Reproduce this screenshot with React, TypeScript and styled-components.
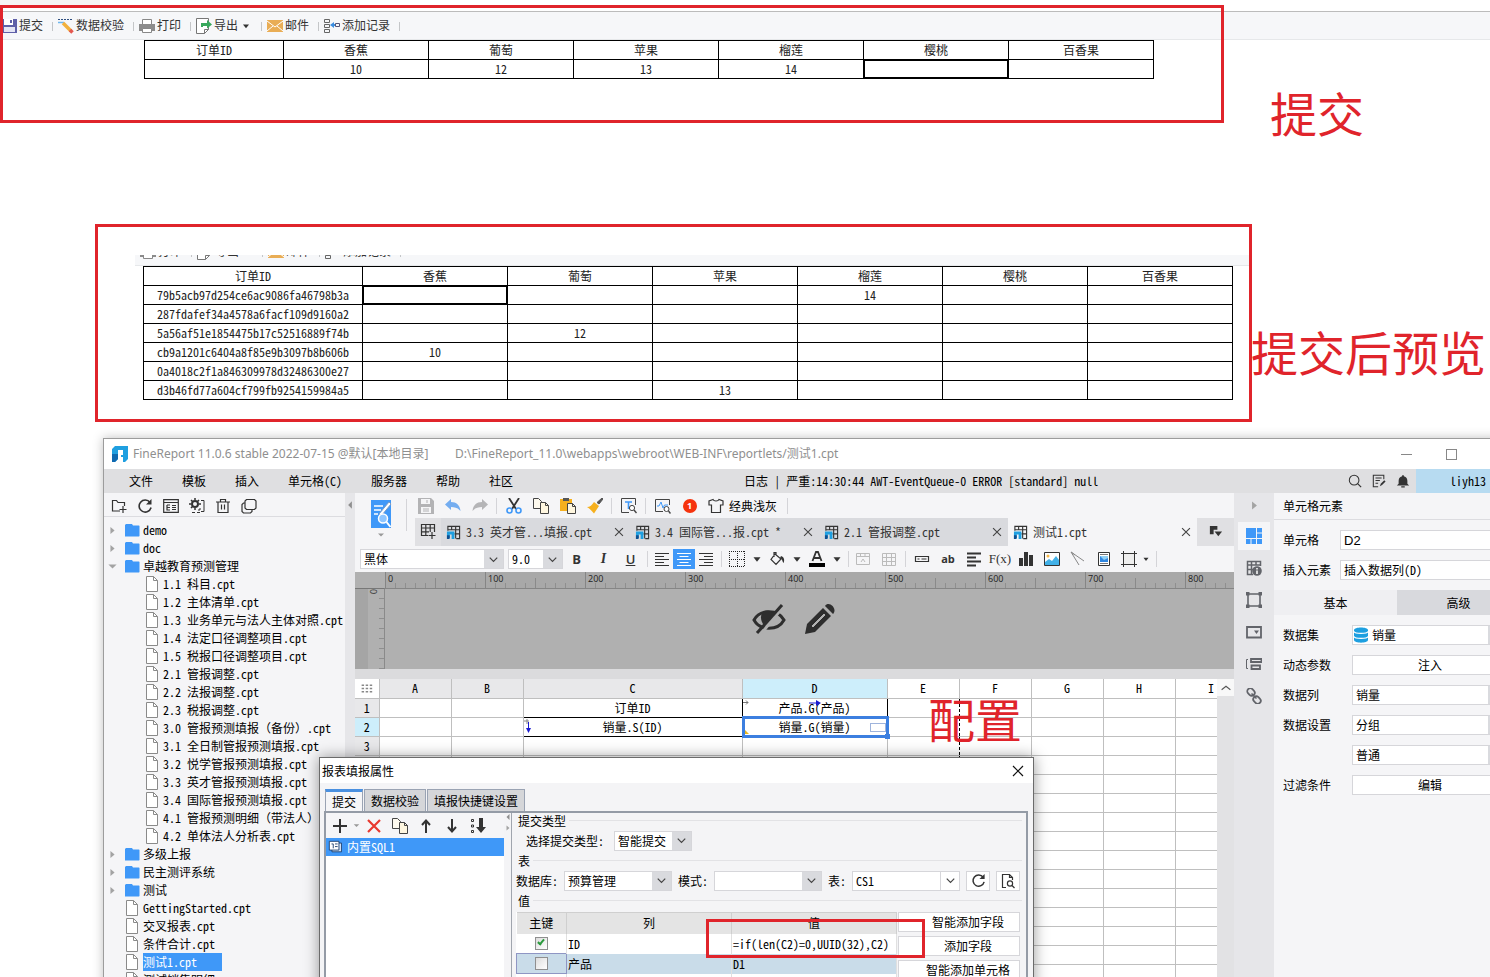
import React from "react";
import styled, { createGlobalStyle, css } from "styled-components";

const MONO = `"Noto Sans Mono CJK SC", "Liberation Mono", "Noto Sans CJK SC", monospace`;
const SANS = `"Noto Sans", "Noto Sans CJK SC", sans-serif`;
const RED = "#e0242b";
const BLUE = "#3f98f8";
const PANEL = "#f5f5f7";

const Global = createGlobalStyle`
  *, *::before, *::after { box-sizing: border-box; }
  html, body { margin: 0; padding: 0; background: #fff; }
  body { font: 12px/18px ${MONO}; color: #000; overflow: hidden; }
  button, input, select { font: inherit; color: inherit; margin: 0; padding: 0; border: 0; background: none; border-radius: 0; }
  h1, h2, h3, ul { margin: 0; padding: 0; font-size: 12px; font-weight: normal; list-style: none; }
  svg { display: block; flex: none; }
`;

/* ---------- icons ---------- */

const glyphs: Record<string, React.ReactNode> = {
  saveColor: (<><path d="M0 1h16v14H2l-2-2z" fill="#5f60a8" /><path d="M3 1h9v6H3z" fill="#fff" /><path d="M9 2h2v3H9z" fill="#5f60a8" /><path d="M3 9h11v5H3z" fill="#e4e5f4" /></>),
  verify: (<><path d="M0 1.500h14" stroke="#2f4f80" strokeDasharray="2 1" /><path d="M0 4.500h6" stroke="#6fb7ee" strokeWidth="1.500" /><path d="M5 5l8 8" stroke="#f2b13c" strokeWidth="3.500" /><path d="M12 12l2.500 2.500" stroke="#e4574f" strokeWidth="3.500" /></>),
  print: (<><path d="M3.500 1.500h9v5h-9z" fill="#fff" stroke="#888" /><path d="M0 6h16v7H0z" fill="#8c8c8c" /><path d="M3.500 10.500h9v4h-9z" fill="#fff" stroke="#888" /></>),
  export: (<><path d="M.500.500h12v11l-4 4h-8z" fill="#fff" stroke="#777" /><path d="M12.500 11.500h-4v4" fill="none" stroke="#777" /><path d="M5 5h6V2l5 4.500-5 4V8H7v1H5z" fill="#37a85c" /></>),
  mail: (<><path d="M0 2h16v12H0z" fill="#e9ad55" /><path d="M0 3l8 6 8-6M0 13l6-5M16 13l-6-5" fill="none" stroke="#fff" /></>),
  record: (<><path d="M.500 1.500h5v3h-5zM.500 6.500h5v3h-5zM.500 11.500h5v3h-5z" fill="none" stroke="#666" /><path d="M6 7l4-3v2h1v2h-1v2z" fill="#3c8ee0" /><path d="M11.500 5.500h4v3h-4z" fill="none" stroke="#557" /></>),
  logo: (<><path d="M0 3l3-3h13v13l-3 3H9V6H6v7l-3 3H0z" fill="#1f9fe0" /><path d="M0 8h6v5l-3 3H0z" fill="#0f69b0" /><path d="M6 4h5v5H9v2h2v5H9V7H6z" fill="#fff" /></>),
  newFolder: (<path d="M9 13H1.500V2.500h4l1.500 2h6.500V8M12 8v7M8.500 11.500h7" fill="none" stroke="#333" strokeWidth="1.200" />),
  refresh: (<><path d="M13 4.500A6 6 0 1 0 14 9.500" fill="none" stroke="#333" strokeWidth="1.600" /><path d="M14.500 1v5.500H9z" fill="#333" /></>),
  listBox: (<path d="M.700 1.700h14.600v12.600H.700zM.700 4.500h14.600M4 7v5h3M4 7h3M4 9.500h3M9 7.500h4M9 9.500h4M9 11.500h4" fill="none" stroke="#333" strokeWidth="1.200" />),
  gearBox: (<><circle cx="6" cy="6" r="3" fill="none" stroke="#333" strokeWidth="2" /><path d="M6 0v2M6 10v2M0 6h2M10 6h2M2 2l1.500 1.500M10 2L8.500 3.500M2 10l1.500-1.500" stroke="#333" strokeWidth="1.500" /><path d="M12 2.500h3v11h-3M3 14.500h3M8 14.500h3M11 10v2h-2" fill="none" stroke="#333" /></>),
  trash: (<path d="M1 4h14M5.500 4V1.500h5V4M3 4v10.500h10V4M6.500 6.500v5M9.500 6.500v5" fill="none" stroke="#333" strokeWidth="1.200" />),
  cascade: (<path d="M5.500 1.500h8l1.500 1.500v7l-1.500 1.500h-8L4 10V3zM4 5H2.500L1 6.500v7l1.500 1.500h7L11 13.500V12" fill="none" stroke="#333" strokeWidth="1.200" />),
  folder: (<path d="M1 3l1-1h6l1 1.500h6l.500.500v10l-.500.500H1z" fill={BLUE} />),
  file: (<><path d="M2.500.500h7l4 4v11h-11z" fill="#fff" stroke="#8a8a8a" /><path d="M9.500.500v4h4" fill="none" stroke="#8a8a8a" /></>),
  save: (<><path d="M0 0h13l3 3v13H0z" fill="#b3b3b5" /><path d="M3 1h9v5H3zM3 9h10v6H3z" fill="#f5f5f7" /><path d="M9 2v3M5 11h6M5 13h6" stroke="#b3b3b5" /></>),
  undo: (<path d="M6 1v3c6 0 9 4 9.500 9C13 10 10 9 6 9v3L0 6.500z" fill="#74adf0" />),
  redo: (<path d="M10 1v3C4 4 1 8 .500 13 3 10 6 9 10 9v3l6-5.500z" fill="#b5b5b7" />),
  cut: (<><path d="M3 0l7 11M13 0L6 11" stroke="#333" strokeWidth="1.800" /><circle cx="3.500" cy="12.500" r="2.500" fill="none" stroke={BLUE} strokeWidth="1.600" /><circle cx="12.500" cy="12.500" r="2.500" fill="none" stroke={BLUE} strokeWidth="1.600" /></>),
  copy: (<><path d="M.500.500h5l3 3v7h-8z" fill="#fdf9ee" stroke="#444" /><path d="M7.500 4.500h5l3 3v8h-8z" fill="#fff7e0" stroke="#444" /><path d="M12.500 4.500v3h3" fill="none" stroke="#444" /></>),
  paste: (<><path d="M0 1h12v12H0z" fill="#f6b01e" /><path d="M3 0h6v3H3z" fill="#555" /><path d="M7.500 5.500h5l3 3v7h-8z" fill="#fff7e0" stroke="#444" /><path d="M12.500 5.500v3h3" fill="none" stroke="#444" /></>),
  brush: (<><path d="M15 0l1 1-4 5-2-1.500z" fill="#555" stroke="#555" /><path d="M7 4l5 4-5 7.500C4 12 2 10 0 9c3 0 5-2 7-5z" fill="#f6b01e" /></>),
  find: (<><path d="M14.500 7V.500H.500v14H8" fill="none" stroke="#444" /><path d="M4 4h7M7.500 4v7" stroke={BLUE} strokeWidth="1.600" /><circle cx="11" cy="10" r="2.600" fill="#fff" stroke="#444" /><path d="M13 12l2.500 3" stroke="#444" strokeWidth="1.400" /></>),
  monitor: (<><path d="M14.500 7V1.500H.500v12H8" fill="none" stroke="#444" /><path d="M2 8h2l2-4 2 6 1.500-3H13" fill="none" stroke={BLUE} /><circle cx="11.500" cy="11" r="2.500" fill="#fff" stroke="#444" /><path d="M13.500 13l2 2.500" stroke="#444" strokeWidth="1.400" /></>),
  shirt: (<path d="M5 1.500L1 3v4h2.500v7.500h9V7H15V3l-4-1.500c-1 2-5 2-6 0z" fill="none" stroke="#333" strokeWidth="1.200" />),
  gridPlus: (<path d="M8 12.500H1.500v-11h13V9M1.500 5h13M1.500 8.800H9M5.800 1.500v11M10.200 1.500V9M12 9v7M8.500 12.500h7" fill="none" stroke="#333" strokeWidth="1.200" />),
  report: (<><path d="M2 6V1.500h12.500v13H11M2 5h12.500M9 9.500h5.500M6 1.500V5M10.300 1.500v13" fill="none" stroke="#333" strokeWidth="1.200" /><path d="M1 7h8v8H6v-5H4v4l-1 1H1z" fill="#1f9fe0" /><path d="M1 11h3v3l-1 1H1z" fill="#0f4f90" /></>),
  close: (<path d="M3.500 3.500l9 9M12.500 3.500l-9 9" stroke="#444" strokeWidth="1.300" />),
  tabMenu: (<><path d="M2 2h8v4H6v5H2z" fill="#333" /><path d="M7 8h8l-4 5z" fill="#333" /></>),
  alignL: (<path d="M1 2.500h14M1 5.500h9M1 8.500h14M1 11.500h9M1 14.500h14" stroke="#333" />),
  alignC: (<path d="M1 2.500h14M3.500 5.500h9M1 8.500h14M3.500 11.500h9M1 14.500h14" stroke="#fff" />),
  alignR: (<path d="M1 2.500h14M6 5.500h9M1 8.500h14M6 11.500h9M1 14.500h14" stroke="#333" />),
  border: (<path d="M0 .500h16M0 8.500h16M0 15.500h16M.500 0v16M8.500 0v16M15.500 0v16" fill="none" stroke="#222" strokeDasharray="1 1" />),
  bucket: (<><path d="M6 3l6 5-5 5.500-5-5zM5 6V1.500h2V5" fill="none" stroke="#333" strokeWidth="1.200" /><path d="M12 5c3 1 4 4 2.500 7-1-1-1-4-3.500-5z" fill="#333" /></>),
  fontColor: (<><path d="M3.500 10L7 1h2l3.500 9M5 7h6" fill="none" stroke="#333" strokeWidth="1.800" /><path d="M0 12h16v4H0z" fill="#000" /></>),
  merge: (<path d="M1.500 2.500h13v11h-13zM1.500 5.500h13M5.500 2.500v3M10 2.500v3M6 11l2-3 2 3" fill="none" stroke="#bbb" />),
  table: (<path d="M1.500 2.500h13v12h-13zM1.500 6.500h13M1.500 10.500h13M5.500 2.500v12M10.500 2.500v12" fill="none" stroke="#bbb" />),
  textField: (<path d="M1.500 5.500h13v5h-13zM3.500 8h2M7.500 8h5" fill="none" stroke="#333" strokeWidth="1.200" />),
  lines: (<path d="M1 2.500h14M1 6.500h9M1 10.500h14M1 14.500h9" stroke="#333" strokeWidth="2" />),
  bars: (<path d="M1 7h4v8H1zM6 1h4v14H6zM11 4h4v11h-4z" fill="#333" />),
  image: (<><path d="M.500 1.500h15v13H.500z" fill="#fff" stroke="#333" /><circle cx="4" cy="5" r="1.500" fill="#f6b94a" /><path d="M1 11l4-3 3 2 4-5 3 4v5H1z" fill="#41b1e8" /></>),
  slash: (<path d="M1 1l13 9M1 1l8 13M1 1l4 3" fill="none" stroke="#888" />),
  docImage: (<><path d="M2.500 1.500h11v13h-11z" fill="#fff" stroke="#333" /><path d="M4 3.500h8M4 12.500h8" stroke="#777" /><path d="M4 5h8v6H4z" fill="#2f86e0" /><path d="M4 5h8v2l-4 2z" fill="#8fd0f5" /></>),
  frame: (<><path d="M2.500 2.500h11v11h-11z" fill="#eee" stroke="#333" /><path d="M0 2.500h16M0 13.500h16M2.500 0v16M13.500 0v16" stroke="#333" /></>),
  search: (<><circle cx="7" cy="7" r="5.500" fill="none" stroke="#333" strokeWidth="1.200" /><path d="M11 11l4 4" stroke="#333" strokeWidth="1.400" /></>),
  docEdit: (<><path d="M13.500 6V1.500h-12v13H7M4 4.500h7M4 7.500h5M4 10.500h3" fill="none" stroke="#333" strokeWidth="1.200" /><path d="M9 14l1-3 4-4 1.500 1.500-4 4z" fill="#333" /></>),
  bell: (<path d="M8 1c1 0 1 1 1 1.500 3 .500 4 3 4 5.500v3l2 2H1l2-2V8c0-2.500 1-5 4-5.500C7 2 7 1 8 1zM6 14h4v1.500H6z" fill="#333" />),
  blocks: (<path d="M0 0h10v10H0zM11 0h5v4.500h-5zM11 5.500h5V10h-5zM0 11h4.500v5H0zM5.500 11H10v5H5.500zM11 11h5v5h-5z" fill={BLUE} />),
  gridInfo: (<><path d="M7 14.500H1.500v-13h13V6M1.500 5h13M1.500 9.500H7M5.500 1.500v13M10 1.500V5" fill="none" stroke="#62646a" strokeWidth="1.500" /><circle cx="11" cy="11" r="4.800" fill="#62646a" /><path d="M11 8v1.500M11 10.500v3.500" stroke="#fff" strokeWidth="1.500" /></>),
  square: (<><path d="M2 2h12v12H2z" fill="none" stroke="#62646a" strokeWidth="1.600" /><path d="M0 0h3.500v3.500H0zM12.500 0H16v3.500h-3.500zM0 12.500h3.500V16H0zM12.500 12.500H16V16h-3.500z" fill="#62646a" /></>),
  combo: (<><path d="M1 3h14v10.500H1z" fill="none" stroke="#62646a" strokeWidth="1.800" /><path d="M8 6.500h5L10.500 10z" fill="#62646a" /></>),
  layers: (<><path d="M2 3.500H.500v9H2" fill="none" stroke="#62646a" /><path d="M5 3h10.500v3H5zM5.500 9.500h8.500v3.500H5.500z" fill="none" stroke="#62646a" strokeWidth="1.800" /></>),
  link: (<><rect x="1" y="1" width="8" height="6" rx="3" transform="rotate(45 5 4)" fill="none" stroke="#62646a" strokeWidth="1.800" /><rect x="7" y="9" width="8" height="6" rx="3" transform="rotate(45 11 12)" fill="none" stroke="#62646a" strokeWidth="1.800" /><path d="M5.500 5.500l5 5" stroke="#62646a" strokeWidth="1.600" /></>),
  database: (<><path d="M1 3c0-3.500 14-3.500 14 0v10c0 3.500-14 3.500-14 0z" fill="#1d9fe0" /><path d="M1 4.500c1 2.500 13 2.500 14 0M1 9.500c1 2.500 13 2.500 14 0" fill="none" stroke="#fff" strokeWidth="1.200" /></>),
  plus: (<path d="M8 1v14M1 8h14" stroke="#333" strokeWidth="2" />),
  remove: (<path d="M2 2l12 12M14 2L2 14" stroke="#e8392f" strokeWidth="2.200" />),
  up: (<path d="M8 15V3M4 7l4-4.500L12 7" fill="none" stroke="#333" strokeWidth="2" />),
  down: (<path d="M8 1v12M4 9l4 4.500L12 9" fill="none" stroke="#333" strokeWidth="2" />),
  sort: (<><path d="M9 0h4v9h3l-5 6-5-6h3z" fill="#333" /><path d="M1.500 1.500h2v2h-2zM1.500 7h2v2h-2zM1.500 12.500h2v2h-2z" fill="none" stroke="#333" /></>),
  sql: (<><path d="M4.500 3.500h11v10h-11z" fill="#cfe0f5" stroke="#173a6a" /><path d="M1.500 1.500h11v10h-11z" fill="#fff" stroke="#173a6a" /><path d="M4 4.500h2v5M8 4.500h3M8 7.500h3" fill="none" stroke="#173a6a" /></>),
  preview: (<><path d="M6 14.500H2.500v-13h7l3 3V7M9.500 1.500v3h3" fill="none" stroke="#333" strokeWidth="1.200" /><circle cx="10" cy="10.500" r="2.600" fill="none" stroke="#333" strokeWidth="1.200" /><path d="M12 12.500l2.500 2.500" stroke="#333" strokeWidth="1.200" /></>),
  chevron: (<path d="M4 6l4 4 4-4" fill="none" stroke="#444" strokeWidth="1.300" />),
  chevronUp: (<path d="M3 10l5-4 5 4" fill="none" stroke="#555" strokeWidth="1.200" />),
  caret: (<path d="M4 6h8l-4 5z" fill="#333" />),
  caretGray: (<path d="M4 6h8l-4 4z" fill="#999" />),
  right: (<path d="M5 3l6 5-6 5z" fill="#a3a3a3" />),
  left: (<path d="M11 2L5 8l6 6z" fill="#8f8f8f" />),
  expanded: (<path d="M2 5h12l-6 6z" fill="#a3a3a3" />),
  dots: (<path d="M2 3h3v2H2zM7 3h3v2H7zM12 3h3v2h-3zM2 7h3v2H2zM7 7h3v2H7zM12 7h3v2h-3zM2 11h3v2H2zM7 11h3v2H7zM12 11h3v2h-3z" fill="#888" />),
  cross: (<path d="M3 3l10 10M13 3L3 13" stroke="#111" strokeWidth="1.200" />),
};

const Icon = ({ name, size = 16 }: { name: string; size?: number }) => (
  <svg width={size} height={size} viewBox="0 0 16 16" aria-hidden="true">{glyphs[name]}</svg>
);

/* ---------- page and annotations ---------- */

const Page = styled.main`
  height: 100vh; display: flex; flex-direction: column; overflow: hidden;
`;
const Section = styled.section`position: relative; flex: none;`;
const SubmitSection = styled(Section)`
  padding: 11px 0 145px;
  background: linear-gradient(#f5f5f5, #f5f5f5) 0 0 / 100px 5px no-repeat;
`;
const SubmitFrame = styled.div`
  position: absolute; top: 5px; left: 0; right: 266px; height: 118px; border: 3px solid ${RED};
  pointer-events: none;
`;
const PreviewFrame = styled.div`
  margin: 0 238px 0 95px; padding: 28px 0 19px 37px; border: 3px solid ${RED};
`;
const Note = styled.h2<{ $top: number; $left?: number; $right?: number }>`
  position: absolute; z-index: 2; top: ${p => p.$top}px; white-space: nowrap;
  ${p => (p.$left !== undefined ? `left: ${p.$left}px;` : `right: ${p.$right}px;`)}
  font: 47px/56px "Noto Sans CJK SC", sans-serif; color: ${RED};
`;

/* ---------- report pages ---------- */

const Strip = styled.div`
  display: flex; align-items: center; height: 29px; background: #f6f7f9;
  border-top: 1px solid #bcbcbc; border-bottom: 1px solid #e6e8ea;
`;
const StripButton = styled.button`
  display: flex; align-items: center; gap: 2px; padding: 0 10px 0 5px; position: relative;
  font: 12px/18px ${SANS}; color: #333; white-space: nowrap;
  &::after { content: ""; position: absolute; right: 0; top: 5px; height: 9px; border-right: 1px solid #c4c6c8; }
`;
const FullStrip = styled(Strip)`${StripButton}:first-child { margin-left: -4px; }`;
const Clip = styled.div`
  height: 11px; overflow: hidden; display: flex; align-items: flex-end;
  ${Strip} { flex: 1; }
`;
const ReportTable = styled.table<{ $left: number }>`
  border-collapse: collapse; table-layout: fixed; width: 1px; margin-left: ${p => p.$left}px;
  color: #222;
  tr { height: 19px; }
  th, td { padding: 0; border: 1px solid #000; font-weight: normal; text-align: center; line-height: 16px; position: relative; white-space: nowrap; }
`;
const ActiveMark = styled.span`position: absolute; inset: -1px; border: 2px solid #000;`;

const FRUITS = ["香蕉", "葡萄", "苹果", "榴莲", "樱桃", "百香果"];

const Report = ({ left, idWidth, rows, active }: {
  left: number; idWidth: number; rows: string[][]; active: [number, number];
}) => (
  <ReportTable $left={left}>
    <colgroup>
      <col style={{ width: idWidth }} />
      {FRUITS.map(f => <col key={f} style={{ width: 145 }} />)}
    </colgroup>
    <thead><tr><th>订单ID</th>{FRUITS.map(f => <th key={f}>{f}</th>)}</tr></thead>
    <tbody>
      {rows.map((r, i) => (
        <tr key={i}>
          {Array.from({ length: 7 }, (_, c) => (
            <td key={c}>{r[c] || ""}{active[0] === i && active[1] === c && <ActiveMark />}</td>
          ))}
        </tr>
      ))}
    </tbody>
  </ReportTable>
);

const PREVIEW = [
  ["79b5acb97d254ce6ac9086fa46798b3a", "", "", "", "14"],
  ["287fdafef34a4578a6facf109d9160a2"],
  ["5a56af51e1854475b17c52516889f74b", "", "12"],
  ["cb9a1201c6404a8f85e9b3097b8b606b", "10"],
  ["0a4018c2f1a846309978d32486300e27"],
  ["d3b46fd77a604cf799fb9254159984a5", "", "", "13"],
];

const STRIP_TAIL = (
  <>
    <StripButton><Icon name="print" />打印</StripButton>
    <StripButton><Icon name="export" />导出<Icon name="caret" size={12} /></StripButton>
    <StripButton><Icon name="mail" />邮件</StripButton>
    <StripButton><Icon name="record" />添加记录</StripButton>
  </>
);

/* ---------- designer window ---------- */

const Designer = styled.section`
  position: relative; flex: none; margin: 16px -30px 0 103px; height: 620px;
  display: flex; flex-direction: column; background: ${PANEL};
  border-top: 1px solid #9c9c9c; border-left: 1px solid #9c9c9c; box-shadow: 0 0 10px rgba(0, 0, 0, 0.25);
`;
const TitleBar = styled.header`
  display: flex; align-items: center; height: 30px; flex: none; padding: 0 63px 0 8px; background: #fff;
`;
const Title = styled.h1`width: 322px; margin-left: 5px; font: 12px/18px ${SANS}; color: #8f8f8f; white-space: pre;`;
const Path = styled.span`font: 12px/18px ${SANS}; color: #8f8f8f;`;
const WinButton = styled.button<{ $min?: boolean }>`
  width: 11px; height: 11px; margin-left: 34px;
  ${p => p.$min ? css`margin-left: auto; height: 1px; background: #888;` : css`border: 1px solid #888;`}
`;
const MenuBar = styled.nav`
  display: flex; align-items: center; height: 24px; flex: none; background: #dfdfe1; padding-left: 25px; gap: 29px;
`;
const LogText = styled.div`display: flex; gap: 6px; margin-left: 202px; white-space: pre;`;
const MenuRight = styled.div`display: flex; align-items: center; gap: 10px; margin-left: auto; height: 24px;`;
const User = styled.span`
  width: 104px; height: 24px; margin-left: -4px; padding-left: 34px; line-height: 24px; background: #b7dbf1;
`;
const Workspace = styled.div`display: flex; flex: 1; min-height: 0;`;

/* file tree */
const TreePane = styled.aside`width: 241px; flex: none; overflow: hidden;`;
const TreeTools = styled.div`
  display: flex; height: 24px; padding-left: 2px; border-bottom: 1px solid #dcdce0; margin-bottom: 4px;
`;
const ToolButton = styled.button<{ $w?: number; $on?: boolean }>`
  width: ${p => p.$w ?? 26}px; height: 26px; display: inline-flex; align-items: center; justify-content: center; flex: none;
  ${p => p.$on && css`background: ${BLUE}; height: 20px;`}
`;
const TreeRow = styled.li<{ $deep?: boolean; $folder?: boolean }>`
  display: flex; align-items: center; height: 18px; white-space: pre; gap: 3px;
  padding-left: ${p => (p.$deep ? 40 : p.$folder ? 3 : 20)}px;
`;
const TreeName = styled.button<{ $on?: boolean }>`
  height: 18px; flex: none; text-align: left;
  ${p => p.$on && css`background: ${BLUE}; color: #fff; width: 79px;`}
`;
const Arrow = styled.span`width: 14px; flex: none;`;
const Splitter = styled.div`width: 10px; flex: none; padding-top: 7px; background: #e6e6e9;`;

type Node = { label: string; kind: "folder" | "open" | "child" | "file"; on?: boolean };
const TREE: Node[] = [
  { label: "demo", kind: "folder" }, { label: "doc", kind: "folder" }, { label: "卓越教育预测管理", kind: "open" },
  ...["1.1 科目.cpt", "1.2 主体清单.cpt", "1.3 业务单元与法人主体对照.cpt", "1.4 法定口径调整项目.cpt", "1.5 税报口径调整项目.cpt",
    "2.1 管报调整.cpt", "2.2 法报调整.cpt", "2.3 税报调整.cpt", "3.0 管报预测填报（备份）.cpt", "3.1 全日制管报预测填报.cpt",
    "3.2 悦学管报预测填报.cpt", "3.3 英才管报预测填报.cpt", "3.4 国际管报预测填报.cpt", "4.1 管报预测明细（带法人）.cpt",
    "4.2 单体法人分析表.cpt"].map(label => ({ label, kind: "child" as const })),
  { label: "多级上报", kind: "folder" }, { label: "民主测评系统", kind: "folder" }, { label: "测试", kind: "folder" },
  { label: "GettingStarted.cpt", kind: "file" }, { label: "交叉报表.cpt", kind: "file" }, { label: "条件合计.cpt", kind: "file" },
  { label: "测试1.cpt", kind: "file", on: true }, { label: "测试销售明细", kind: "file" },
];

const Tree = () => (
  <TreePane>
    <TreeTools>
      {["newFolder", "refresh", "listBox", "gearBox", "trash", "cascade"].map(n => (
        <ToolButton key={n} aria-label={n}><Icon name={n} size={16} /></ToolButton>
      ))}
    </TreeTools>
    <ul>
      {TREE.map(n => {
        const folder = n.kind === "folder" || n.kind === "open";
        return (
          <TreeRow key={n.label} $deep={n.kind === "child"} $folder={folder}>
            {folder && <Arrow><Icon name={n.kind === "open" ? "expanded" : "right"} size={11} /></Arrow>}
            <Icon name={folder ? "folder" : "file"} size={16} />
            <TreeName $on={n.on}>{n.label}</TreeName>
          </TreeRow>
        );
      })}
    </ul>
  </TreePane>
);

/* editor */
const Editor = styled.div`flex: 1; min-width: 0; display: flex; flex-direction: column; overflow: hidden;`;
const EditorTop = styled.div`display: flex; height: 53px; flex: none;`;
const PreviewButton = styled.button`
  width: 51px; height: 49px; display: flex; flex-direction: column; align-items: center; gap: 1px; padding-top: 7px;
`;
const TopSep = styled.i`width: 1px; height: 32px; margin-top: 6px; background: #d4d4d8;`;
const TopStack = styled.div`flex: 1; min-width: 0; padding-left: 8px;`;
const Bar = styled.div`display: flex; align-items: center; height: 25px; margin-left: -3px;`;
const FormatBar = styled.div`display: flex; align-items: center; height: 26px; flex: none; padding-left: 5px;`;
const Sep = styled.i<{ $w?: number; $h?: number }>`
  width: ${p => p.$w ?? 7}px; height: ${p => p.$h ?? 16}px; flex: none; display: block;
  background: linear-gradient(#d4d4d8, #d4d4d8) center / 1px 100% no-repeat;
`;
const Alert = styled.b`
  width: 14px; height: 14px; border-radius: 7px; background: #f5330d; color: #fff; font: bold 9px/14px ${SANS}; text-align: center;
`;
const TabBar = styled.div`display: flex; height: 28px; background: #e0e0e3;`;
const Tab = styled.div<{ $on?: boolean }>`
  display: flex; align-items: center; width: 189px; gap: 5px; padding: 0 4px 0 5px; color: #333; white-space: pre;
  background: ${p => (p.$on ? PANEL : "#d9dade")};
  button:last-child { margin-left: auto; }
`;
const Letter = styled.span<{ $k: "b" | "i" | "u" | "ab" | "fx" }>`
  font: bold 13px/16px "Open Sans", sans-serif; color: #333;
  ${p => p.$k === "i" && css`font: italic bold 14px/16px "Liberation Serif", serif;`}
  ${p => p.$k === "u" && css`text-decoration: underline; font-weight: 600;`}
  ${p => p.$k === "ab" && css`font-size: 11px;`}
  ${p => p.$k === "fx" && css`font: 13px/16px "Liberation Serif", serif;`}
`;
const SelectBox = styled.span<{ $w: number; $plain?: boolean }>`
  display: inline-flex; align-items: center; flex: none; width: ${p => p.$w}px; height: 20px;
  border: 1px solid #d6d6da; background: #fff; color: #000;
  select { appearance: none; flex: 1; min-width: 0; height: 100%; padding-left: 3px; outline: 0; }
  > span { width: 19px; height: 100%; display: flex; align-items: center; justify-content: center; background: ${p => (p.$plain ? "#fff" : "#d9dade")}; ${p => p.$plain && css`border-left: 1px solid #d6d6da;`} }
`;
const Select = ({ label, value, w, plain, icon }: {
  label: string; value: string; w: number; plain?: boolean; icon?: string;
}) => (
  <SelectBox $w={w} $plain={plain}>
    {icon && <Icon name={icon} />}
    <select aria-label={label}><option>{value}</option></select>
    <span><Icon name="chevron" size={15} /></span>
  </SelectBox>
);

const Canvas = styled.div`
  height: 97px; flex: none; display: flex; background: #b0b0b0; position: relative; overflow: hidden;
`;
const VRuler = styled.div`
  width: 30px; flex: none; margin-top: 16px; border-right: 1px solid #8a8a8a; border-top: 1px solid #777; color: #333;
  padding-left: 13px;
  background:
    repeating-linear-gradient(transparent 0 9px, #8f8f8f 9px 10px) right 0 top 0 / 5px 100% no-repeat,
    linear-gradient(#a5a5a5, #a5a5a5) 0 0 / 13px 100% no-repeat;
  span { display: block; height: 9px; writing-mode: vertical-rl; font: 9px/11px "Open Sans", sans-serif; }
`;
const HRuler = styled.div`
  flex: 1; min-width: 0; height: 17px; display: flex; overflow: hidden; background: #a8a8a8; border-bottom: 1px solid #858585;
`;
const Segment = styled.span`
  width: 100px; flex: none; padding-left: 2px; font: 9px/13px "Open Sans", sans-serif; color: #222;
  border-left: 1px solid #858585;
  background:
    linear-gradient(#8a8a8a, #8a8a8a) 49px 100% / 1px 10px no-repeat,
    repeating-linear-gradient(90deg, transparent 0 9px, #8f8f8f 9px 10px) 0 100% / 100% 5px no-repeat;
`;
const CanvasTools = styled.div`
  position: absolute; top: 31px; left: 50%; margin-left: -43px; display: flex; gap: 18px;
`;
const Sheet = styled.div`
  position: relative; flex: 1; min-height: 0; display: flex; align-items: flex-start; overflow: hidden; border-top: 10px solid #dbdbdd; background: #fff;
`;
const SheetScroll = styled.div`flex: 1; min-width: 0; overflow: hidden;`;
const ScrollBar = styled.div`width: 17px; flex: none; align-self: stretch; background: #e2e2e4;`;
const ScrollUp = styled.button`
  width: 17px; height: 17px; background: #f8f8f8; display: flex; align-items: center; justify-content: center;
`;
const Grid = styled.table`
  border-collapse: collapse; table-layout: fixed; width: 1px; background: #fff;
  tr { height: 19px; }
  th, td { padding: 0; border: 1px solid #bfbfbf; border-left: 0; font-weight: normal; text-align: center; line-height: 16px; position: relative; white-space: nowrap; }
  th { border-top: 0; }
`;
const Head = styled.th<{ $tone?: "gray" | "on" }>`
  background: ${p => (p.$tone === "gray" ? "#e8e8ea" : p.$tone === "on" ? "#cdeefb" : "#fff")};
  svg { margin: 0 auto; }
`;
const Cell = styled.td<{ $box?: boolean; $dash?: boolean }>`
  ${p => p.$box && css`&& { border: 1px solid #000; }`}
  ${p => p.$dash && css`&& { border-right: 1px dashed #000; }`}
`;
const Selected = styled.span`
  position: absolute; inset: -2px -2px -2px -1px; border: 3px solid #3c7fe0;
  &::after { content: ""; position: absolute; right: -4px; bottom: -4px; width: 5px; height: 5px; background: #3c7fe0; }
`;
const Widget = styled.span`position: absolute; right: 1px; top: 5px; width: 16px; height: 9px; border: 1px solid #9fb4dc;`;
const Mark = styled.svg<{ $x: number; $y: number }>`position: absolute; left: ${p => p.$x}px; top: ${p => p.$y}px;`;

const COLS: [string, number, ("gray" | "on")?][] = [
  ["A", 72, "gray"], ["B", 72, "gray"], ["C", 219, "gray"], ["D", 145, "on"], ["E", 72], ["F", 72], ["G", 72], ["H", 72], ["I", 72],
];

const Spreadsheet = () => (
  <Grid>
    <colgroup><col style={{ width: 24 }} />{COLS.map(c => <col key={c[0]} style={{ width: c[1] }} />)}</colgroup>
    <thead><tr><Head><Icon name="dots" size={13} /></Head>{COLS.map(c => <Head key={c[0]} $tone={c[2]}>{c[0]}</Head>)}</tr></thead>
    <tbody>
      {Array.from({ length: 16 }, (_, r) => (
        <tr key={r}>
          <Head $tone={r === 1 ? "on" : "gray"}>{r < 3 && r + 1}</Head>
          <Cell /><Cell />
          <Cell $box={r < 2}>
            {r === 0 && "订单ID"}
            {r === 1 && <>销量.S(ID)<Mark $x={0} $y={1} width="8" height="15" viewBox="0 0 8 15"><path d="M0 2h5M3 0v5" stroke="#888" /><path d="M4.500 3v9" stroke="#1a1ad0" /><path d="M2 9h5l-2.500 5z" fill="#1a1ad0" /></Mark></>}
          </Cell>
          <Cell $box={r < 2}>
            {r === 0 && <>产品.G(产品)<Mark $x={66} $y={0} width="12" height="8" viewBox="0 0 12 8"><path d="M0 4h8" stroke="#1a1ad0" /><path d="M7 1l5 3-5 3z" fill="#1a1ad0" /></Mark><Mark $x={0} $y={1} width="6" height="5" viewBox="0 0 6 5"><path d="M0 2.500h5M3 .500l2 2-2 2" fill="none" stroke="#777" /></Mark></>}
            {r === 1 && <>销量.G(销量)<Selected /><Widget /><Mark $x={2} $y={12} width="4" height="4" viewBox="0 0 4 4"><path d="M0 0l4 4H0z" fill="#e8b820" /></Mark></>}
          </Cell>
          <Cell $dash /><Cell /><Cell /><Cell /><Cell />
        </tr>
      ))}
    </tbody>
  </Grid>
);

const TABS = ["3.3 英才管...填报.cpt", "3.4 国际管...报.cpt *", "2.1 管报调整.cpt", "测试1.cpt"];

const EditorArea = () => (
  <Editor>
    <EditorTop>
      <PreviewButton aria-label="预览">
        <svg width="22" height="28" viewBox="0 0 22 28">
          <path d="M1 0h20v28H1z" fill={BLUE} />
          <path d="M4 6h9M4 10h7M4 14h4" stroke="#fff" strokeWidth="1.500" />
          <path d="M9 14L19 2l2 2-9 11z" fill="#fff" stroke="#7d9cc4" />
          <circle cx="13" cy="18.500" r="4.500" fill="#8fc6ff" stroke="#fff" strokeWidth="1.500" />
          <path d="M16.500 22l4 5" stroke="#fff" strokeWidth="2" />
        </svg>
        <Icon name="caretGray" size={12} />
      </PreviewButton>
      <TopSep />
      <TopStack>
        <Bar>
          {["save", "undo", "redo"].map(n => <ToolButton key={n} $w={27} aria-label={n}><Icon name={n} /></ToolButton>)}
          <Sep />
          {["cut", "copy", "paste", "brush"].map(n => <ToolButton key={n} $w={27} aria-label={n}><Icon name={n} /></ToolButton>)}
          <Sep />
          <ToolButton $w={27} aria-label="查找"><Icon name="find" /></ToolButton>
          <Sep />
          <ToolButton $w={27} aria-label="监控"><Icon name="monitor" /></ToolButton>
          <ToolButton $w={27} aria-label="消息"><Alert>1</Alert></ToolButton>
          <ToolButton $w={26} aria-label="主题"><Icon name="shirt" /></ToolButton>
          <span>经典浅灰</span>
          <Sep $w={20} />
        </Bar>
        <TabBar>
          <ToolButton $w={26} aria-label="新建"><Icon name="gridPlus" size={16} /></ToolButton>
          {TABS.map((t, i) => (
            <Tab key={t} $on={i === 3}>
              <Icon name="report" size={15} />
              <button>{t}</button>
              <button aria-label="关闭"><Icon name="close" size={14} /></button>
            </Tab>
          ))}
          <ToolButton $w={37} aria-label="标签列表"><Icon name="tabMenu" size={15} /></ToolButton>
        </TabBar>
      </TopStack>
    </EditorTop>
    <FormatBar>
      <Select label="字体" value="黑体" w={144} />
      <Sep $w={4} $h={0} />
      <Select label="字号" value="9.0" w={55} />
      <ToolButton $w={27}><Letter $k="b">B</Letter></ToolButton>
      <ToolButton $w={27}><Letter $k="i">I</Letter></ToolButton>
      <ToolButton $w={27}><Letter $k="u">U</Letter></ToolButton>
      <Sep $w={7} />
      <ToolButton $w={22} aria-label="左对齐"><Icon name="alignL" /></ToolButton>
      <ToolButton $w={22} $on aria-label="居中"><Icon name="alignC" /></ToolButton>
      <ToolButton $w={22} aria-label="右对齐"><Icon name="alignR" /></ToolButton>
      <Sep $w={9} />
      {["border", "bucket", "fontColor"].map(n => (
        <React.Fragment key={n}>
          <ToolButton $w={22} aria-label={n}><Icon name={n} /></ToolButton>
          <ToolButton $w={18} aria-label={`${n} 选项`}><Icon name="caret" size={14} /></ToolButton>
        </React.Fragment>
      ))}
      <Sep $w={4} />
      <ToolButton aria-label="合并"><Icon name="merge" /></ToolButton>
      <ToolButton aria-label="拆分"><Icon name="table" /></ToolButton>
      <Sep />
      <ToolButton aria-label="控件"><Icon name="textField" /></ToolButton>
      <ToolButton><Letter $k="ab">ab</Letter></ToolButton>
      <ToolButton aria-label="富文本"><Icon name="lines" /></ToolButton>
      <ToolButton><Letter $k="fx">F(x)</Letter></ToolButton>
      {["bars", "image", "slash", "docImage"].map(n => <ToolButton key={n} aria-label={n}><Icon name={n} /></ToolButton>)}
      <ToolButton $w={24} aria-label="悬浮元素"><Icon name="frame" /></ToolButton>
      <Icon name="caret" size={10} />
      <Sep $w={10} />
    </FormatBar>
    <Canvas>
      <VRuler><span>0</span></VRuler>
      <HRuler>{Array.from({ length: 12 }, (_, i) => <Segment key={i}>{i < 9 && i * 100}</Segment>)}</HRuler>
      <CanvasTools>
        <svg width="34" height="32" viewBox="0 0 34 32" fill="none" stroke="#2e2e2e">
          <path d="M2 17c6-11 24-11 30 0-6 11-24 11-30 0z" strokeWidth="3" />
          <path d="M10 10c-2 4-1 9 2 12l10-11c-3-4-9-5-12-1z" fill="#2e2e2e" stroke="none" />
          <path d="M31 4L8 32" stroke="#b0b0b0" strokeWidth="3" />
          <path d="M30 2L5 30" strokeWidth="3" />
        </svg>
        <svg width="32" height="32" viewBox="0 0 32 32" fill="#2e2e2e">
          <path d="M1 31l2-10L19 5l8 8L11 29z" /><path d="M21 3c4-6 13 3 8 8z" />
          <path d="M8 23L20 11l1 1L9 24z" fill="#b0b0b0" stroke="#b0b0b0" />
        </svg>
      </CanvasTools>
    </Canvas>
    <Sheet>
      <SheetScroll><Spreadsheet /></SheetScroll>
      <ScrollBar><ScrollUp aria-label="向上滚动"><Icon name="chevronUp" size={14} /></ScrollUp></ScrollBar>
    </Sheet>
  </Editor>
);

/* property panel */
const IconRail = styled.div`width: 40px; flex: none; background: #e6e6e9; padding: 0 4px; display: flex; flex-direction: column; gap: 4px;`;
const RailButton = styled.button<{ $on?: boolean }>`
  height: 28px; display: flex; align-items: center; justify-content: center; background: ${p => (p.$on ? PANEL : "none")};
  &:first-child { height: 25px; }
`;
const Props = styled.aside`width: 246px; flex: none; background: ${PANEL};`;
const PropsTitle = styled.h3`height: 27px; line-height: 26px; padding-left: 9px; border-bottom: 1px solid #dcdce0; margin-bottom: 5px;`;
const PropRow = styled.div<{ $wide?: boolean }>`
  display: flex; align-items: center; height: 30px; padding-left: 9px;
  label { width: ${p => (p.$wide ? 57 : 69)}px; flex: none; }
`;
const TextInput = styled.input`
  flex: 1; min-width: 0; height: 20px; border: 1px solid #d6d6da; background: #fff; padding-left: 3px; font: 13px/18px "Liberation Sans", sans-serif;
`;
const PushButton = styled.button<{ $w?: number; $pad?: number }>`
  width: ${p => p.$w ?? 156}px; height: 20px; border: 1px solid #d6d6da; background: #fff; display: flex; align-items: center; justify-content: center; white-space: nowrap;
  padding-left: ${p => p.$pad ?? 0}px;
`;
const PropTabs = styled.div`display: flex; height: 25px; margin: 5px 0;`;
const PropTab = styled.button<{ $on?: boolean }>`flex: 1; background: ${p => (p.$on ? "#efeff2" : "#d8d9dd")};`;

const PropertyPanel = () => (
  <Props>
    <PropsTitle>单元格元素</PropsTitle>
    <PropRow $wide><label htmlFor="cell">单元格</label><TextInput id="cell" defaultValue="D2" /></PropRow>
    <PropRow $wide><label>插入元素</label><Select label="插入元素" value="插入数据列(D)" w={180} /></PropRow>
    <PropTabs><PropTab $on>基本</PropTab><PropTab>高级</PropTab></PropTabs>
    <PropRow><label>数据集</label><Select label="数据集" value="销量" w={156} icon="database" /></PropRow>
    <PropRow><label>动态参数</label><PushButton>注入</PushButton></PropRow>
    <PropRow><label>数据列</label><Select label="数据列" value="销量" w={156} /></PropRow>
    <PropRow><label>数据设置</label><Select label="数据设置" value="分组" w={156} /></PropRow>
    <PropRow><label /><Select label="分组方式" value="普通" w={156} /></PropRow>
    <PropRow><label>过滤条件</label><PushButton>编辑</PushButton></PropRow>
  </Props>
);

/* ---------- dialog ---------- */

const Dialog = styled.div`
  position: absolute; z-index: 3; left: 215px; top: 318px; width: 715px; height: 320px;
  display: flex; flex-direction: column; background: #f4f4f6; border: 1px solid #6b6b6b;
  box-shadow: 0 0 14px rgba(0, 0, 0, 0.4);
`;
const DialogTitle = styled.header`
  display: flex; align-items: center; justify-content: space-between; height: 25px; flex: none; padding: 0 7px 0 2px; background: #fff;
`;
const DialogTabs = styled.div`display: flex; align-items: flex-end; gap: 1px; height: 28px; flex: none; padding-left: 5px;`;
const DialogTab = styled.button<{ $on?: boolean }>`
  height: 22px; padding: 0 6px; border: 1px solid #9aa3b3; border-bottom: 0; background: #d5d6d9; white-space: nowrap;
  ${p => p.$on && css`background: ${PANEL}; border-top: 3px solid #4a90e0; line-height: 16px;`}
`;
const DialogBody = styled.div`
  display: flex; flex: 1; min-height: 0; margin: 0 5px 0 4px; border: 2px solid #949ba6; border-bottom: 0;
`;
const ListPane = styled.div`width: 178px; flex: none; background: #fff;`;
const ListTools = styled.div`display: flex; height: 25px; background: ${PANEL}; padding-left: 3px; align-items: center;`;
const ListItem = styled.div`display: flex; align-items: center; gap: 5px; height: 18px; padding-left: 2px; background: ${BLUE}; color: #fff;`;
const DialogSplit = styled.div`width: 8px; flex: none; border-right: 1px solid #a0a5ae; svg + svg { margin-top: 3px; }`;
const Form = styled.div`flex: 1; min-width: 0; padding: 0 4px;`;
const Legend = styled.div`
  display: flex; align-items: center; gap: 3px; height: 15px; line-height: 15px; padding-left: 2px;
  &::after { content: ""; flex: 1; border-top: 1px solid #e2e2e5; }
`;
const FormRow = styled.div<{ $indent?: number; $gap?: number }>`
  display: flex; align-items: center; height: 25px; padding-left: ${p => p.$indent ?? 0}px; gap: ${p => p.$gap ?? 6}px; white-space: nowrap;
`;
const FormBottom = styled.div`display: flex; gap: 1px; margin-top: 4px;`;
const ValueTable = styled.table`
  border-collapse: collapse; table-layout: fixed; width: 381px; background: #fff;
  tr { height: 20px; }
  th { background: #e4e4e4; font-weight: normal; height: 21px; border: 1px solid #cfcfcf; border-width: 1px 1px 0 0; padding: 0; line-height: 18px; }
  td { padding: 0 1px; line-height: 18px; white-space: nowrap; border-right: 1px solid #e0e0e0; }
  td:first-child { text-align: center; }
`;
const ValueRow = styled.tr<{ $on?: boolean }>`
  background: ${p => (p.$on ? "#c9dce9" : "#fff")};
  ${p => p.$on && css`td:first-child { border: 1px solid #8f96c4; }`}
`;
const Check = styled.input`
  appearance: none; width: 13px; height: 13px; border: 1px solid #8f8f8f; background: linear-gradient(135deg, #ddd, #fff);
  display: block; margin: 0 auto; position: relative;
  &:checked::after { content: ""; position: absolute; left: 3px; top: 0; width: 4px; height: 7px; border: solid #2a9a3c; border-width: 0 2px 2px 0; transform: rotate(40deg); }
`;
const ButtonColumn = styled.div`display: flex; flex-direction: column; gap: 4px;`;
const ValueFrame = styled.div`
  position: absolute; left: 386px; top: 161px; width: 219px; height: 39px; border: 3px solid ${RED}; pointer-events: none;
`;

const FillDialog = () => (
  <Dialog role="dialog" aria-label="报表填报属性">
    <DialogTitle><span>报表填报属性</span><button aria-label="关闭"><Icon name="cross" /></button></DialogTitle>
    <DialogTabs>
      <DialogTab $on>提交</DialogTab><DialogTab>数据校验</DialogTab><DialogTab>填报快捷键设置</DialogTab>
    </DialogTabs>
    <DialogBody>
      <ListPane>
        <ListTools>
          <ToolButton $w={22} aria-label="添加"><Icon name="plus" /></ToolButton>
          <ToolButton $w={10} aria-label="添加选项"><Icon name="caretGray" size={11} /></ToolButton>
          {["remove", "copy", "up", "down", "sort"].map(n => <ToolButton key={n} aria-label={n}><Icon name={n} /></ToolButton>)}
        </ListTools>
        <ListItem><Icon name="sql" size={14} />内置SQL1</ListItem>
      </ListPane>
      <DialogSplit><Icon name="left" size={8} /><Icon name="right" size={8} /></DialogSplit>
      <Form>
        <Legend>提交类型</Legend>
        <FormRow $indent={10} $gap={10}>选择提交类型:<Select label="选择提交类型" value="智能提交" w={78} /></FormRow>
        <Legend>表</Legend>
        <FormRow>
          数据库:<Select label="数据库" value="预算管理" w={108} />
          模式:<Select label="模式" value="" w={108} />
          表:<Select label="表" value="CS1" w={108} plain />
          <PushButton $w={24} aria-label="刷新"><Icon name="refresh" size={15} /></PushButton>
          <PushButton $w={24} aria-label="预览"><Icon name="preview" size={16} /></PushButton>
        </FormRow>
        <Legend>值</Legend>
        <FormBottom>
          <ValueTable>
            <colgroup><col style={{ width: 50 }} /><col style={{ width: 165 }} /><col /></colgroup>
            <thead><tr><th>主键</th><th>列</th><th>值</th></tr></thead>
            <tbody>
              <ValueRow><td><Check type="checkbox" defaultChecked aria-label="ID 主键" /></td><td>ID</td><td>=if(len(C2)=0,UUID(32),C2)</td></ValueRow>
              <ValueRow $on><td><Check type="checkbox" aria-label="产品 主键" /></td><td>产品</td><td>D1</td></ValueRow>
              <ValueRow><td /><td /><td /></ValueRow>
            </tbody>
          </ValueTable>
          <ButtonColumn>
            <PushButton $w={122} $pad={18}>智能添加字段</PushButton>
            <PushButton $w={122} $pad={18}>添加字段</PushButton>
            <PushButton $w={122} $pad={18}>智能添加单元格</PushButton>
          </ButtonColumn>
        </FormBottom>
      </Form>
    </DialogBody>
    <ValueFrame />
  </Dialog>
);

export default function App() {
  return (
    <Page>
      <Global />
      <SubmitSection>
        <FullStrip>
          <StripButton><Icon name="saveColor" />提交</StripButton>
          <StripButton><Icon name="verify" />数据校验</StripButton>
          {STRIP_TAIL}
        </FullStrip>
        <Report left={144} idWidth={139} rows={[["", "10", "12", "13", "14"]]} active={[0, 5]} />
        <SubmitFrame />
        <Note $top={84} $right={126}>提交</Note>
      </SubmitSection>
      <Section>
        <PreviewFrame>
          <Clip><Strip>{STRIP_TAIL}</Strip></Clip>
          <Report left={8} idWidth={219} rows={PREVIEW} active={[0, 1]} />
        </PreviewFrame>
        <Note $top={99} $right={4}>提交后预览</Note>
      </Section>
      <Designer>
        <TitleBar>
          <Icon name="logo" />
          <Title>FineReport 11.0.6 stable 2022-07-15 @默认[本地目录]</Title>
          <Path>D:\FineReport_11.0\webapps\webroot\WEB-INF\reportlets/测试1.cpt</Path>
          <WinButton $min aria-label="最小化" />
          <WinButton aria-label="最大化" />
        </TitleBar>
        <MenuBar>
          {["文件", "模板", "插入", "单元格(C)", "服务器", "帮助", "社区"].map(m => <button key={m}>{m}</button>)}
          <LogText><span>日志</span><span>|</span><span>严重:14:30:44 AWT-EventQueue-0 ERROR [standard] null</span></LogText>
          <MenuRight>
            <Icon name="search" size={14} /><Icon name="docEdit" size={14} /><Icon name="bell" size={14} />
            <User>liyh13</User>
          </MenuRight>
        </MenuBar>
        <Workspace>
          <Tree />
          <Splitter><Icon name="left" size={10} /></Splitter>
          <EditorArea />
          <IconRail>
            <RailButton aria-label="收起"><Icon name="right" size={13} /></RailButton>
            {["blocks", "gridInfo", "square", "combo", "layers", "link"].map((n, i) => (
              <RailButton key={n} $on={i === 0} aria-label={n}><Icon name={n} /></RailButton>
            ))}
          </IconRail>
          <PropertyPanel />
        </Workspace>
        <Note $top={251} $left={824}>配置</Note>
        <FillDialog />
      </Designer>
    </Page>
  );
}
